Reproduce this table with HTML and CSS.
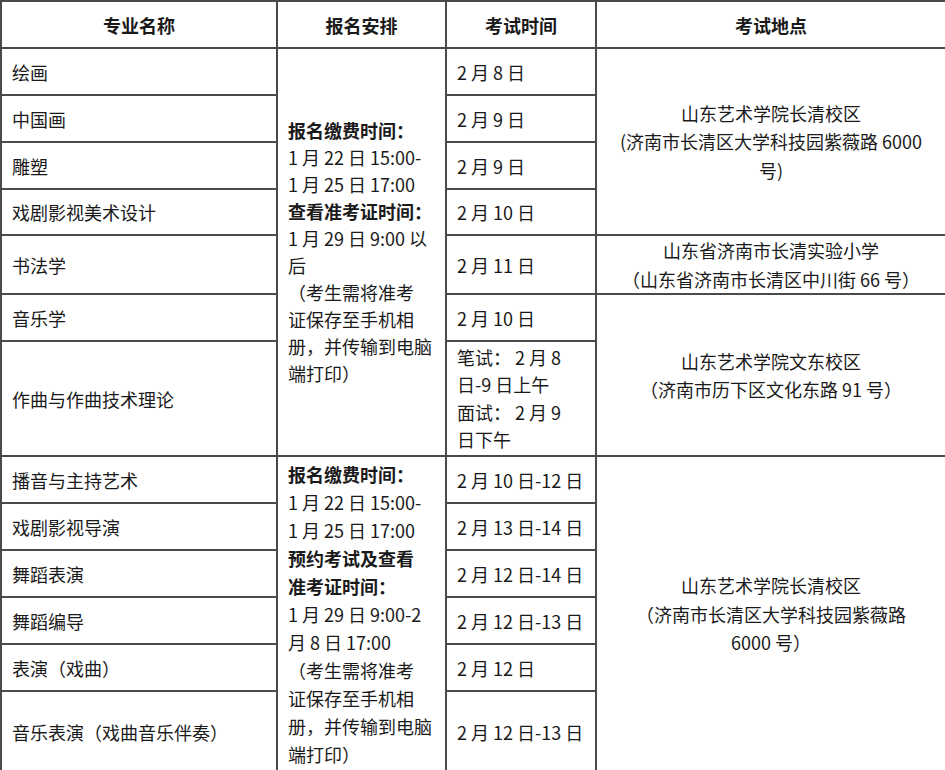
FILE: index.html
```html
<!DOCTYPE html>
<html lang="zh-CN">
<head>
<meta charset="utf-8">
<title>考试安排</title>
<link rel="stylesheet" href="styles.css">
</head>
<body>
<table class="schedule">
  <colgroup>
    <col class="c-major">
    <col class="c-reg">
    <col class="c-time">
    <col class="c-place">
  </colgroup>
  <thead>
    <tr class="h-head">
      <th>专业名称</th>
      <th>报名安排</th>
      <th>考试时间</th>
      <th>考试地点</th>
    </tr>
  </thead>
  <tbody>
    <tr class="h-47">
      <td class="major">绘画</td>
      <td class="reg reg-a" rowspan="7"><b>报名缴费时间：</b><br>1 月 22 日 15:00-<br>1 月 25 日 17:00<br><b>查看准考证时间：</b><br>1 月 29 日 9:00 以<br>后<br>（考生需将准考<br>证保存至手机相<br>册，并传输到电脑<br>端打印）</td>
      <td class="time">2 月 8 日</td>
      <td class="place" rowspan="4">山东艺术学院长清校区<br>(济南市长清区大学科技园紫薇路 6000<br>号)</td>
    </tr>
    <tr class="h-47">
      <td class="major">中国画</td>
      <td class="time">2 月 9 日</td>
    </tr>
    <tr class="h-47">
      <td class="major">雕塑</td>
      <td class="time">2 月 9 日</td>
    </tr>
    <tr class="h-46">
      <td class="major">戏剧影视美术设计</td>
      <td class="time">2 月 10 日</td>
    </tr>
    <tr class="h-58">
      <td class="major">书法学</td>
      <td class="time">2 月 11 日</td>
      <td class="place">山东省济南市长清实验小学<br>（山东省济南市长清区中川街 66 号）</td>
    </tr>
    <tr class="h-47">
      <td class="major">音乐学</td>
      <td class="time">2 月 10 日</td>
      <td class="place" rowspan="2">山东艺术学院文东校区<br>（济南市历下区文化东路 91 号）</td>
    </tr>
    <tr class="h-115">
      <td class="major">作曲与作曲技术理论</td>
      <td class="time multi">笔试：&nbsp;2 月 8<br>日-9 日上午<br>面试：&nbsp;2 月 9<br>日下午</td>
    </tr>
    <tr class="h-47">
      <td class="major">播音与主持艺术</td>
      <td class="reg reg-b" rowspan="6"><b>报名缴费时间：</b><br>1 月 22 日 15:00-<br>1 月 25 日 17:00<br><b>预约考试及查看</b><br><b>准考证时间：</b><br>1 月 29 日 9:00-2<br>月 8 日 17:00<br>（考生需将准考<br>证保存至手机相<br>册，并传输到电脑<br>端打印）</td>
      <td class="time">2 月 10 日-12 日</td>
      <td class="place" rowspan="6">山东艺术学院长清校区<br>（济南市长清区大学科技园紫薇路<br>6000 号）</td>
    </tr>
    <tr class="h-47">
      <td class="major">戏剧影视导演</td>
      <td class="time">2 月 13 日-14 日</td>
    </tr>
    <tr class="h-47">
      <td class="major">舞蹈表演</td>
      <td class="time">2 月 12 日-14 日</td>
    </tr>
    <tr class="h-47">
      <td class="major">舞蹈编导</td>
      <td class="time">2 月 12 日-13 日</td>
    </tr>
    <tr class="h-47">
      <td class="major">表演（戏曲）</td>
      <td class="time">2 月 12 日</td>
    </tr>
    <tr class="h-81">
      <td class="major">音乐表演（戏曲音乐伴奏）</td>
      <td class="time">2 月 12 日-13 日</td>
    </tr>
  </tbody>
</table>
</body>
</html>
```

FILE: styles.css
```css
html, body {
  margin: 0;
  padding: 0;
  background: #ffffff;
}

body {
  font-family: "Noto Sans CJK SC", "Noto Sans", sans-serif;
  font-size: 18px;
  color: #1a1a1a;
}

.schedule {
  width: 945px;
  border-collapse: collapse;
  table-layout: fixed;
}

.c-major { width: 276px; }
.c-reg { width: 169px; }
.c-time { width: 150px; }
.c-place { width: 350px; }

.schedule th,
.schedule td {
  border: 2px solid #4a4a4a;
  padding: 0 10px;
  vertical-align: middle;
  white-space: nowrap;
  overflow: hidden;
}

.schedule th {
  font-weight: 700;
  text-align: center;
  font-size: 18px;
}

.h-head { height: 47px; }
.h-46 { height: 46px; }
.h-47 { height: 47px; }
.h-58 { height: 58px; }
.h-81 { height: 81px; }
.h-115 { height: 115px; }

.major {
  padding-left: 12px;
  text-align: left;
}

.reg {
  text-align: left;
  padding-left: 10px;
}

.reg b { font-weight: 700; }

.reg-a { line-height: 27px; }
.reg-b { line-height: 28px; }

.time {
  text-align: left;
  padding-left: 10px;
}

.time.multi { line-height: 27.5px; }

.place {
  text-align: center;
  line-height: 28.5px;
}
```
